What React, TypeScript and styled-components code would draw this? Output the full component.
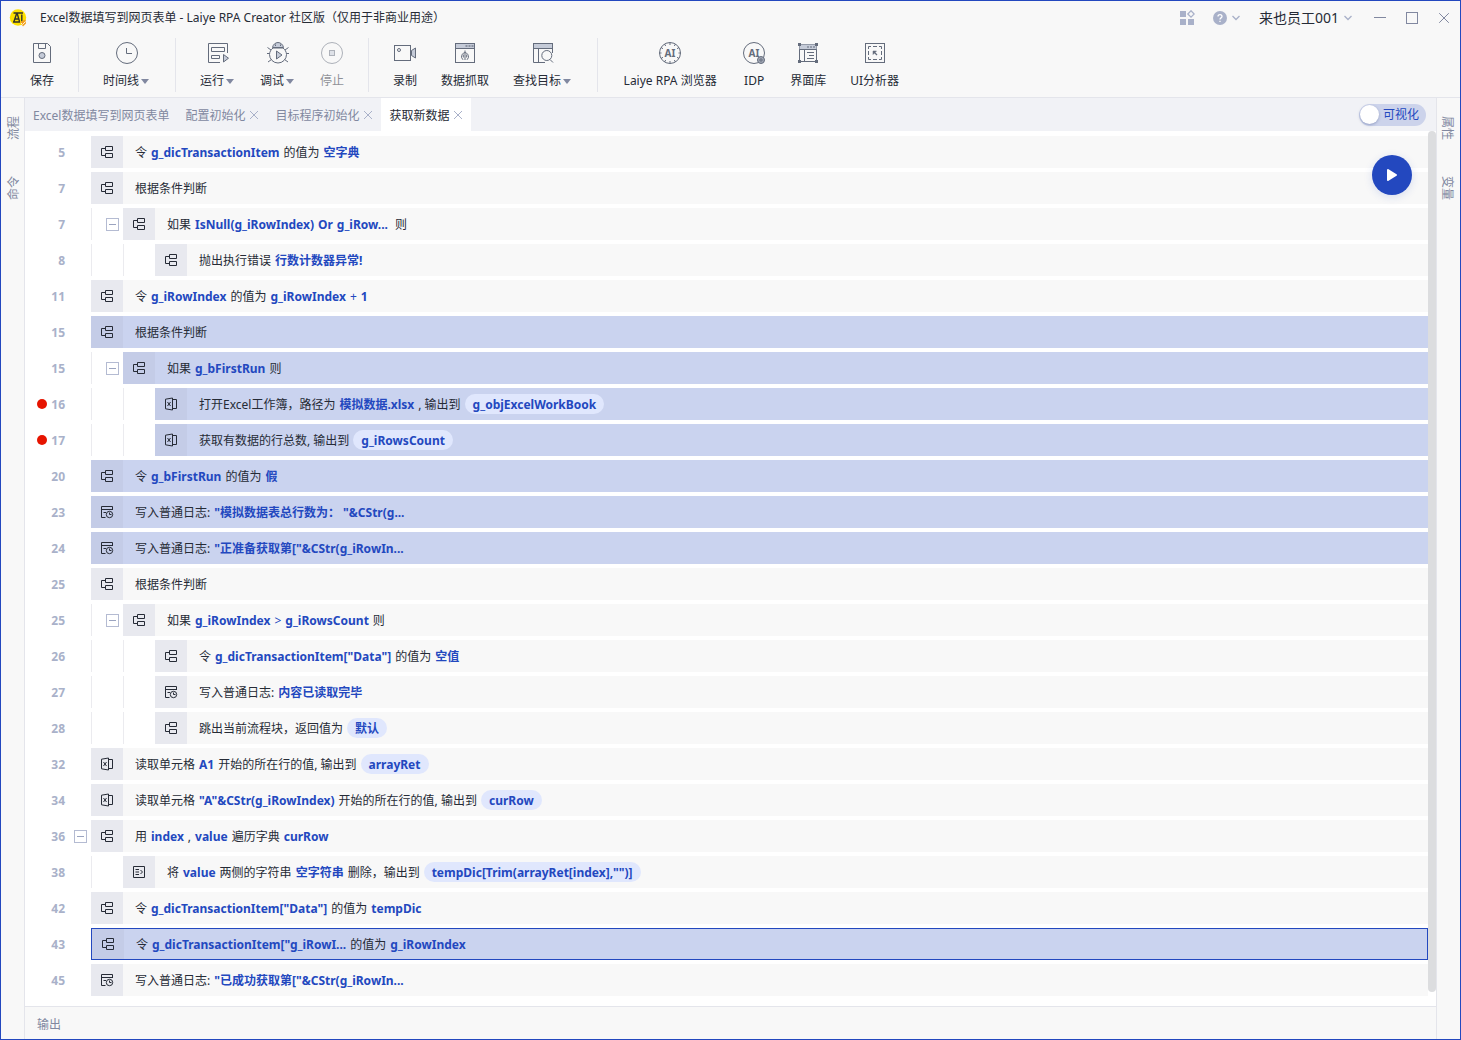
import React, { useState } from "react";
import styled, { createGlobalStyle, css } from "styled-components";

const color = {
  brand: "#2348bf",
  ink: "#262b36",
  muted: "#8188a0",
  faint: "#a9b1c9",
  panel: "#f8f8f8",
  strip: "#f1f2f6",
  line: "#e4e5eb",
  iconCell: "#e8e9ef",
  selected: "#cad3ef",
  selectedCell: "#c4cce7",
  pill: "#e0e7fd",
  stroke: "#646c7c",
  tint: "#c5cbd8",
};

const GlobalStyle = createGlobalStyle`
  * { box-sizing: border-box; }
  body {
    margin: 0;
    background: #fff;
    color: ${color.ink};
    font-family: "Noto Sans", "Noto Sans CJK SC", sans-serif;
    font-size: 12px;
    line-height: 20px;
  }
  button {
    margin: 0;
    padding: 0;
    border: 0;
    background: none;
    color: inherit;
    font: inherit;
    cursor: pointer;
  }
  svg { display: block; flex: none; }
`;

const Window = styled.div`
  display: flex;
  flex-direction: column;
  min-height: 100vh;
  border: 1px solid ${color.brand};
`;

const TitleBar = styled.header`
  display: flex;
  align-items: center;
  height: 33px;
  padding: 0 10px 0 7px;
  background: ${color.panel};
`;

const Title = styled.h1`
  flex: 1;
  margin: 0 0 0 12px;
  font-size: 12px;
  font-weight: 400;
  white-space: nowrap;
`;

const TitleActions = styled.div`
  display: flex;
  align-items: center;
  gap: 18px;
`;

const WindowControls = styled.div`
  display: flex;
  gap: 20px;
  margin-left: 3px;
`;

const TitleButton = styled.button<{ $large?: boolean }>`
  display: flex;
  align-items: center;
  gap: 4px;
  font-size: ${(p) => (p.$large ? 14 : 12)}px;
  color: ${color.ink};
`;

const Toolbar = styled.nav`
  display: flex;
  height: 64px;
  padding-left: 17px;
  background: ${color.panel};
  border-bottom: 1px solid ${color.line};
`;

const Tool = styled.button`
  display: flex;
  flex-direction: column;
  align-items: center;
  gap: 6px;
  padding: 7px 12px 6px;
  white-space: nowrap;
  &:disabled { opacity: 0.5; cursor: default; color: ${color.ink}; }
`;

const ToolLabel = styled.span<{ $wide?: boolean }>`
  display: flex;
  align-items: center;
  justify-content: center;
  min-width: ${(p) => (p.$wide ? 96 : 24)}px;
`;

const Caret = styled.span`
  width: 8px;
  margin: 0 2px;
  border: 4px solid transparent;
  border-top: 5px solid ${color.muted};
  border-bottom: 0;
`;

const Divider = styled.span`
  width: 1px;
  margin: 4px 12px 5px;
  background: ${color.line};
`;

const Workspace = styled.div`
  display: flex;
  flex: 1;
`;

const SideRail = styled.aside<{ $side: "left" | "right" }>`
  display: flex;
  flex-direction: column;
  align-items: center;
  gap: 36px;
  width: 24px;
  padding-top: 18px;
  background: ${color.panel};
  ${(p) =>
    p.$side === "left"
      ? css`padding-left: 3px; border-right: 1px solid ${color.line};`
      : css`padding-right: 3px; border-left: 1px solid ${color.line};`}
`;

const RailButton = styled.button<{ $flip?: boolean }>`
  color: ${color.muted};
  writing-mode: vertical-rl;
  text-orientation: sideways;
  line-height: 20px;
  ${(p) => p.$flip && "transform: rotate(180deg);"}
`;

const Main = styled.main`
  display: flex;
  flex: 1;
  flex-direction: column;
  min-width: 0;
`;

const TabStrip = styled.div`
  display: flex;
  align-items: center;
  height: 33px;
  padding-right: 10px;
  background: ${color.strip};
`;

const Tab = styled.div<{ $active?: boolean }>`
  display: flex;
  align-items: center;
  gap: 4px;
  height: 100%;
  padding: 0 8px;
  white-space: nowrap;
  color: ${(p) => (p.$active ? color.ink : color.muted)};
  background: ${(p) => (p.$active ? "#fff" : "transparent")};
`;

const TabName = styled.button`
  padding-top: 2px;
`;

const ViewSwitch = styled.label`
  display: flex;
  align-items: center;
  gap: 4px;
  height: 22px;
  margin-left: auto;
  padding: 0 7px 0 1px;
  border-radius: 11px;
  background: #ccd3eb;
  color: ${color.brand};
  cursor: pointer;
`;

const SwitchInput = styled.input`
  appearance: none;
  width: 19px;
  height: 19px;
  margin: 0;
  border-radius: 50%;
  background: #fff;
  box-shadow: 0 1px 3px rgba(40, 60, 120, 0.35);
`;

const Editor = styled.section`
  position: relative;
  display: flex;
  flex: 1;
`;

const Lines = styled.ol`
  display: flex;
  flex: 1;
  flex-direction: column;
  gap: 4px;
  min-width: 0;
  margin: 0;
  padding: 5px 0 10px;
  list-style: none;
`;

const Line = styled.li`
  display: flex;
  height: 32px;
`;

const Gutter = styled.div`
  display: flex;
  align-items: center;
  width: 66px;
  padding: 0 4px 0 12px;
`;

const Breakpoint = styled.span<{ $on?: boolean }>`
  width: 10px;
  height: 10px;
  border-radius: 50%;
  background: ${(p) => (p.$on ? "#e61400" : "transparent")};
`;

const LineNumber = styled.span`
  width: 18px;
  margin-right: auto;
  padding-top: 2px;
  text-align: right;
  font-weight: 700;
  color: ${color.faint};
`;

const Guide = styled.div`
  display: flex;
  align-items: center;
  justify-content: flex-end;
  width: 32px;
  padding-right: 4px;
  border-left: 1px solid #ebebef;
`;

const Fold = styled.button`
  display: flex;
  align-items: center;
  justify-content: center;
  width: 13px;
  height: 13px;
  border: 1px solid #b4bbd2;
  &::before {
    content: "";
    width: 7px;
    height: 1px;
    background: #9ba4c0;
  }
`;

const Command = styled.div<{ $selected?: boolean; $focused?: boolean }>`
  display: flex;
  flex: 1;
  min-width: 0;
  background: ${(p) => (p.$selected ? color.selected : color.panel)};
  ${(p) => p.$focused && css`border: 1px solid ${color.brand};`}
`;

const IconCell = styled.span<{ $selected?: boolean }>`
  display: flex;
  align-items: center;
  justify-content: center;
  width: 32px;
  background: ${(p) => (p.$selected ? color.selectedCell : color.iconCell)};
`;

const CommandText = styled.div`
  display: flex;
  align-items: center;
  gap: 4px;
  padding-left: 12px;
  white-space: pre;
`;

const Word = styled.span`
  padding-top: 2px;
`;

const Value = styled(Word)<{ $light?: boolean }>`
  color: ${color.brand};
  font-weight: ${(p) => (p.$light ? 400 : 700)};
`;

const Pill = styled.span`
  height: 20px;
  padding: 0 8px;
  border-radius: 10px;
  background: ${color.pill};
  color: ${color.brand};
  font-weight: 700;
  line-height: 22px;
`;

const ScrollTrack = styled.div`
  width: 8px;
  padding-bottom: 14px;
`;

const ScrollThumb = styled.div`
  height: 100%;
  border-radius: 4px;
  background: #dcdddf;
`;

const RunButton = styled.button`
  position: absolute;
  top: 24px;
  right: 24px;
  display: flex;
  align-items: center;
  justify-content: center;
  width: 40px;
  height: 40px;
  border-radius: 50%;
  background: ${color.brand};
  box-shadow: 0 2px 8px rgba(35, 72, 191, 0.15);
`;

const OutputBar = styled.footer`
  display: flex;
  align-items: center;
  height: 33px;
  padding: 4px 12px 0;
  color: ${color.muted};
  background: ${color.panel};
  border-top: 1px solid ${color.line};
`;

/* ---------- drawings ---------- */

const Glyph = ({ children }: { children: React.ReactNode }) => (
  <svg width="24" height="24" viewBox="0 0 24 24" fill="none" stroke={color.stroke} aria-hidden="true">
    {children}
  </svg>
);

const AiMark = () => (
  <text x="12" y="15.5" textAnchor="middle" fontSize="10" fontWeight="700" fill={color.stroke} stroke="none">
    AI
  </text>
);

const toolIcons: Record<string, React.ReactNode> = {
  save: (
    <Glyph>
      <path d="M3.5 2.5H17.5L20.5 5.5V21.5H3.5Z" />
      <path d="M8.5 2.5V7.5H15.5V2.5" />
      <circle cx="12" cy="14.5" r="3" fill={color.tint} />
    </Glyph>
  ),
  time: (
    <Glyph>
      <circle cx="12" cy="12" r="10.5" />
      <path d="M11.5 7V12.5H17" />
    </Glyph>
  ),
  run: (
    <Glyph>
      <path d="M14 21.5H2.5V2.5H21.5V12" />
      <path d="M5.5 6.5H18.5V10.5H5.5ZM5.5 14.5H13.5V17.5H5.5Z" />
      <path d="M17.5 13.5V21L22.5 17.2Z" fill={color.tint} />
    </Glyph>
  ),
  debug: (
    <Glyph>
      <path d="M6.5 6.5C7 3.5 9.5 1.5 12 1.5S17 3.5 17.5 6.5Z" fill={color.tint} />
      <path d="M7 7C5 8.5 3.5 11 3.5 13.5A8.5 8.5 0 0 0 20.5 13.5C20.5 11 19 8.5 17 7Z" />
      <path d="M1 12.5H3.5M20.5 12.5H23M1.5 6.5L5 9M22.5 6.5L19 9M2 21L5.5 18.5M22 21L18.5 18.5" />
      <path d="M9.5 3.5V5M14.5 3.5V5" />
      <path d="M10.5 10V18L16 14Z" fill={color.tint} />
    </Glyph>
  ),
  stop: (
    <Glyph>
      <circle cx="12" cy="12" r="10.5" />
      <rect x="9.5" y="9.5" width="5" height="5" fill={color.tint} />
    </Glyph>
  ),
  record: (
    <Glyph>
      <rect x="1.5" y="4.5" width="16" height="15" />
      <path d="M22.5 7V17L18.5 14.5V9.5Z" fill={color.tint} />
      <circle cx="6" cy="9" r="1.5" />
    </Glyph>
  ),
  grab: (
    <Glyph>
      <rect x="2.5" y="2.5" width="19" height="19" />
      <rect x="2.5" y="2.5" width="19" height="5" fill={color.tint} />
      <path d="M12.5 5H14.5M15.5 5H17.5M18.5 5H20.5" strokeWidth="2" opacity=".6" />
      <path d="M12 9.5V19M12 11.5C9.500 12 8.500 14 8.500 16.500L10 18.800M12 11.500C14.500 12 15.500 14 15.500 16.500L14 18.800M10.300 13.500V16.500M13.700 13.500V16.500" />
    </Glyph>
  ),
  find: (
    <Glyph>
      <path d="M14 21.5H2.5V2.5H21.5V12M7.5 7.5V21.5" />
      <rect x="2.5" y="2.5" width="19" height="5" fill={color.tint} />
      <circle cx="15.8" cy="14.5" r="5" fill={color.panel} />
      <path d="M19 18.5L22 21.5" />
    </Glyph>
  ),
  browser: (
    <Glyph>
      <circle cx="12" cy="12" r="10.5" />
      <path d="M12 1.5V4M12 20V22.5M1.5 12H3.5M20.5 12H22.5M6.5 3L7.7 5M17.5 3L16.3 5M3 6.5L5 7.7M21 6.5L19 7.7M6.5 21L7.7 19M17.5 21L16.3 19M3 17.5L5 16.3M21 17.5L19 16.3" />
      <AiMark />
    </Glyph>
  ),
  idp: (
    <Glyph>
      <circle cx="12" cy="12" r="10.5" />
      <AiMark />
      <circle cx="19" cy="19" r="3.5" fill="#a3a9b6" />
      <circle cx="19" cy="19" r="1.2" />
    </Glyph>
  ),
  library: (
    <Glyph>
      <rect x="3.5" y="3.5" width="17" height="17" />
      <rect x="3.5" y="3.5" width="17" height="5" fill={color.tint} stroke="none" />
      <path d="M3.5 8.5H20.5" />
      <path d="M11 6H13M14 6H16M17 6H19" strokeWidth="2" opacity=".5" />
      <path d="M8.5 8.5V20.5M11 11.5H18M13 14.5H18M11 17.5H18" />
      <path d="M2 3.500H5M19 3.500H22M2 20.500H5M19 20.500H22" strokeWidth="3" />
    </Glyph>
  ),
  inspect: (
    <Glyph>
      <rect x="2.5" y="2.5" width="19" height="19" />
      <path d="M5.5 8V5.5H8M10 5.5H14M16 5.5H18.5V8M18.5 10V14M18.5 16V18.5H16M14 18.5H10M8 18.5H5.5V16M5.5 14V10" />
      <path d="M10 13.500V10H13.500Z" fill={color.stroke} strokeWidth=".5" />
      <path d="M11 11L14 14" strokeWidth="1.300" />
    </Glyph>
  ),
};

const rowIcons: Record<string, React.ReactNode> = {
  flow: <path d="M6.5 2.5H13.5V6.5H6.5ZM6.5 9.5H13.5V13.5H6.5ZM6.5 4.5H2.5V11.5H6.5" />,
  excel: (
    <>
      <path d="M2.5 3.2L9.5 2V14L2.5 12.8ZM9.5 3.5H13.5V12.5H9.5" />
      <path d="M4.500 6L7.500 10M7.500 6L4.500 10" />
    </>
  ),
  log: (
    <>
      <path d="M6.5 13.5H2.5V2.5H13.5V6M2.5 5.5H13.5M4.5 8.5H7" />
      <circle cx="10.5" cy="10.5" r="3.2" />
      <path d="M10.5 8.5V10.5H12.5" />
    </>
  ),
  text: <path d="M2.5 2.5H13.5V13.5H2.5ZM4.5 5.5H8M4.5 8H8M4.5 10.5H8M9.5 6L11.5 8L9.5 10" />,
};

const RowIcon = ({ name }: { name: string }) => (
  <svg width="16" height="16" viewBox="0 0 16 16" fill="none" stroke={color.ink} strokeLinejoin="round" aria-hidden="true">
    {rowIcons[name]}
  </svg>
);

const Chevron = () => (
  <svg width="10" height="8" viewBox="0 0 10 8" fill="none" stroke={color.faint} strokeWidth="1.3" aria-hidden="true">
    <path d="M1.5 2L5 5.5L8.5 2" />
  </svg>
);

const CloseMark = ({ size = 10, stroke = color.faint }: { size?: number; stroke?: string }) => (
  <svg width={size} height={size} viewBox="0 0 10 10" fill="none" stroke={stroke} aria-hidden="true">
    <path d="M1 1L9 9M9 1L1 9" strokeWidth={10 / size} />
  </svg>
);

const Logo = () => (
  <svg width="20" height="20" viewBox="0 0 20 20" aria-hidden="true">
    <circle cx="10" cy="9.5" r="8.2" fill="#ffe100" />
    <path d="M5.5 5H15M6 13.5L8.3 6.500H9.500L11.500 13.500M7 11H11M13.800 6.500V13.500M5 14H12" fill="none" stroke="#33322a" strokeWidth="1.400" />
    <path d="M12 14L17.500 11.500L18 15.500L15 18.500Z" fill="#f2a024" />
    <path d="M13 15L14.500 16.500L17.500 13.500" fill="none" stroke="#fff3d0" />
  </svg>
);

/* ---------- data ---------- */

type ToolSpec = { icon: string; label: string; menu?: boolean; disabled?: boolean; wide?: boolean };

const toolGroups: ToolSpec[][] = [
  [{ icon: "save", label: "保存" }],
  [{ icon: "time", label: "时间线", menu: true }],
  [
    { icon: "run", label: "运行", menu: true },
    { icon: "debug", label: "调试", menu: true },
    { icon: "stop", label: "停止", disabled: true },
  ],
  [
    { icon: "record", label: "录制" },
    { icon: "grab", label: "数据抓取" },
    { icon: "find", label: "查找目标", menu: true },
  ],
  [
    { icon: "browser", label: "Laiye RPA 浏览器", wide: true },
    { icon: "idp", label: "IDP" },
    { icon: "library", label: "界面库" },
    { icon: "inspect", label: "UI分析器" },
  ],
];

const tabs = [
  { label: "Excel数据填写到网页表单", closable: false },
  { label: "配置初始化", closable: true },
  { label: "目标程序初始化", closable: true },
  { label: "获取新数据", closable: true },
];

/* A plain string is prose; v is a value, o an operator, p an output variable. */
type Part = string | { v: string } | { o: string } | { p: string };

type LineSpec = {
  no: number;
  level?: number;
  icon?: string;
  fold?: boolean;
  stop?: boolean;
  state?: "selected" | "focused";
  parts: Part[];
};

const lines: LineSpec[] = [
  { no: 5, parts: ["令", { v: "g_dicTransactionItem" }, "的值为", { v: "空字典" }] },
  { no: 7, parts: ["根据条件判断"] },
  { no: 7, level: 1, fold: true, parts: ["如果", { v: "IsNull(g_iRowIndex)" }, { v: "Or" }, { v: "g_iRow... " }, "则"] },
  { no: 8, level: 2, parts: ["抛出执行错误", { v: "行数计数器异常!" }] },
  { no: 11, parts: ["令", { v: "g_iRowIndex" }, "的值为", { v: "g_iRowIndex" }, { o: "+" }, { v: "1" }] },
  { no: 15, state: "selected", parts: ["根据条件判断"] },
  { no: 15, level: 1, fold: true, state: "selected", parts: ["如果", { v: "g_bFirstRun" }, "则"] },
  {
    no: 16, level: 2, icon: "excel", stop: true, state: "selected",
    parts: ["打开Excel工作簿，路径为", { v: "模拟数据.xlsx" }, ", 输出到", { p: "g_objExcelWorkBook" }],
  },
  {
    no: 17, level: 2, icon: "excel", stop: true, state: "selected",
    parts: ["获取有数据的行总数, 输出到", { p: "g_iRowsCount" }],
  },
  { no: 20, state: "selected", parts: ["令", { v: "g_bFirstRun" }, "的值为", { v: "假" }] },
  { no: 23, icon: "log", state: "selected", parts: ["写入普通日志:", { v: '"模拟数据表总行数为： "&CStr(g...' }] },
  { no: 24, icon: "log", state: "selected", parts: ["写入普通日志:", { v: '"正准备获取第["&CStr(g_iRowIn...' }] },
  { no: 25, parts: ["根据条件判断"] },
  {
    no: 25, level: 1, fold: true,
    parts: ["如果", { v: "g_iRowIndex" }, { o: ">" }, { v: "g_iRowsCount" }, "则"],
  },
  { no: 26, level: 2, parts: ["令", { v: 'g_dicTransactionItem["Data"]' }, "的值为", { v: "空值" }] },
  { no: 27, level: 2, icon: "log", parts: ["写入普通日志:", { v: "内容已读取完毕" }] },
  { no: 28, level: 2, parts: ["跳出当前流程块，返回值为", { p: "默认" }] },
  { no: 32, icon: "excel", parts: ["读取单元格", { v: "A1" }, "开始的所在行的值, 输出到", { p: "arrayRet" }] },
  {
    no: 34, icon: "excel",
    parts: ["读取单元格", { v: '"A"&CStr(g_iRowIndex)' }, "开始的所在行的值, 输出到", { p: "curRow" }],
  },
  { no: 36, fold: true, parts: ["用", { v: "index" }, ",", { v: "value" }, "遍历字典", { v: "curRow" }] },
  {
    no: 38, level: 1, icon: "text",
    parts: ["将", { v: "value" }, "两侧的字符串", { v: "空字符串" }, "删除，输出到", { p: 'tempDic[Trim(arrayRet[index],"")]' }],
  },
  { no: 42, parts: ["令", { v: 'g_dicTransactionItem["Data"]' }, "的值为", { v: "tempDic" }] },
  {
    no: 43, state: "focused",
    parts: ["令", { v: 'g_dicTransactionItem["g_iRowI...' }, "的值为", { v: "g_iRowIndex" }],
  },
  { no: 45, icon: "log", parts: ["写入普通日志:", { v: '"已成功获取第["&CStr(g_iRowIn...' }] },
];

const renderPart = (part: Part, key: number) => {
  if (typeof part === "string") return <Word key={key}>{part}</Word>;
  if ("v" in part) return <Value key={key}>{part.v}</Value>;
  if ("o" in part) return <Value key={key} $light>{part.o}</Value>;
  return <Pill key={key}>{part.p}</Pill>;
};

const CodeLine = ({ line }: { line: LineSpec }) => {
  const level = line.level ?? 0;
  const selected = Boolean(line.state);
  const fold = line.fold ? <Fold aria-label="折叠" /> : null;
  return (
    <Line>
      <Gutter>
        <Breakpoint $on={line.stop} />
        <LineNumber>{line.no}</LineNumber>
        {level === 0 && fold}
      </Gutter>
      {Array.from({ length: level }, (_, i) => (
        <Guide key={i}>{i === level - 1 && fold}</Guide>
      ))}
      <Command $selected={selected} $focused={line.state === "focused"}>
        <IconCell $selected={selected}>
          <RowIcon name={line.icon ?? "flow"} />
        </IconCell>
        <CommandText>{line.parts.map(renderPart)}</CommandText>
      </Command>
    </Line>
  );
};

export default function App() {
  const [active, setActive] = useState(3);
  const [sourceView, setSourceView] = useState(false);

  return (
    <>
      <GlobalStyle />
      <Window>
        <TitleBar>
          <Logo />
          <Title>Excel数据填写到网页表单 - Laiye RPA Creator 社区版（仅用于非商业用途）</Title>
          <TitleActions>
            <TitleButton aria-label="应用">
              <svg width="16" height="16" viewBox="0 0 16 16" fill={color.faint} aria-hidden="true">
                <path d="M1 1H7V7H1ZM1 9H7V15H1ZM9 9H15V15H9Z" />
                <path d="M12 .8L15.2 4L12 7.2L8.8 4Z" fill="none" stroke={color.faint} strokeWidth="1.3" />
              </svg>
            </TitleButton>
            <TitleButton aria-label="帮助">
              <svg width="14" height="14" viewBox="0 0 14 14" aria-hidden="true">
                <circle cx="7" cy="7" r="7" fill={color.faint} />
                <path d="M5 5.5C5 3 9 3 9 5.5C9 7 7 6.8 7 8.5M7 9.8V11" fill="none" stroke="#fff" strokeWidth="1.3" />
              </svg>
              <Chevron />
            </TitleButton>
            <TitleButton $large>
              来也员工001
              <Chevron />
            </TitleButton>
            <WindowControls>
              <TitleButton aria-label="最小化">
                <svg width="12" height="12" viewBox="0 0 12 12" stroke={color.muted} aria-hidden="true">
                  <path d="M0 5.5H12" />
                </svg>
              </TitleButton>
              <TitleButton aria-label="最大化">
                <svg width="12" height="12" viewBox="0 0 12 12" fill="none" stroke={color.muted} aria-hidden="true">
                  <rect x=".5" y=".5" width="11" height="11" />
                </svg>
              </TitleButton>
              <TitleButton aria-label="关闭">
                <CloseMark size={12} stroke={color.muted} />
              </TitleButton>
            </WindowControls>
          </TitleActions>
        </TitleBar>

        <Toolbar>
          {toolGroups.map((group, g) => (
            <React.Fragment key={g}>
              {g > 0 && <Divider />}
              {group.map((tool) => (
                <Tool key={tool.icon} disabled={tool.disabled}>
                  {toolIcons[tool.icon]}
                  <ToolLabel $wide={tool.wide}>
                    {tool.label}
                    {tool.menu && <Caret />}
                  </ToolLabel>
                </Tool>
              ))}
            </React.Fragment>
          ))}
        </Toolbar>

        <Workspace>
          <SideRail $side="left">
            <RailButton $flip>流程</RailButton>
            <RailButton $flip>命令</RailButton>
          </SideRail>

          <Main>
            <TabStrip>
              {tabs.map((tab, i) => (
                <Tab key={tab.label} $active={i === active}>
                  <TabName onClick={() => setActive(i)}>{tab.label}</TabName>
                  {tab.closable && (
                    <button aria-label={`关闭 ${tab.label}`}>
                      <CloseMark />
                    </button>
                  )}
                </Tab>
              ))}
              <ViewSwitch>
                <SwitchInput
                  type="checkbox"
                  checked={sourceView}
                  onChange={(e) => setSourceView(e.target.checked)}
                />
                可视化
              </ViewSwitch>
            </TabStrip>

            <Editor>
              <Lines>
                {lines.map((line, i) => (
                  <CodeLine key={i} line={line} />
                ))}
              </Lines>
              <ScrollTrack>
                <ScrollThumb />
              </ScrollTrack>
              <RunButton aria-label="运行">
                <svg width="12" height="14" viewBox="0 0 12 14" aria-hidden="true">
                  <path d="M2 2L10 7L2 12Z" fill="#fff" stroke="#fff" strokeWidth="2" strokeLinejoin="round" />
                </svg>
              </RunButton>
            </Editor>

            <OutputBar>
              <button>输出</button>
            </OutputBar>
          </Main>

          <SideRail $side="right">
            <RailButton>属性</RailButton>
            <RailButton>变量</RailButton>
          </SideRail>
        </Workspace>
      </Window>
    </>
  );
}
